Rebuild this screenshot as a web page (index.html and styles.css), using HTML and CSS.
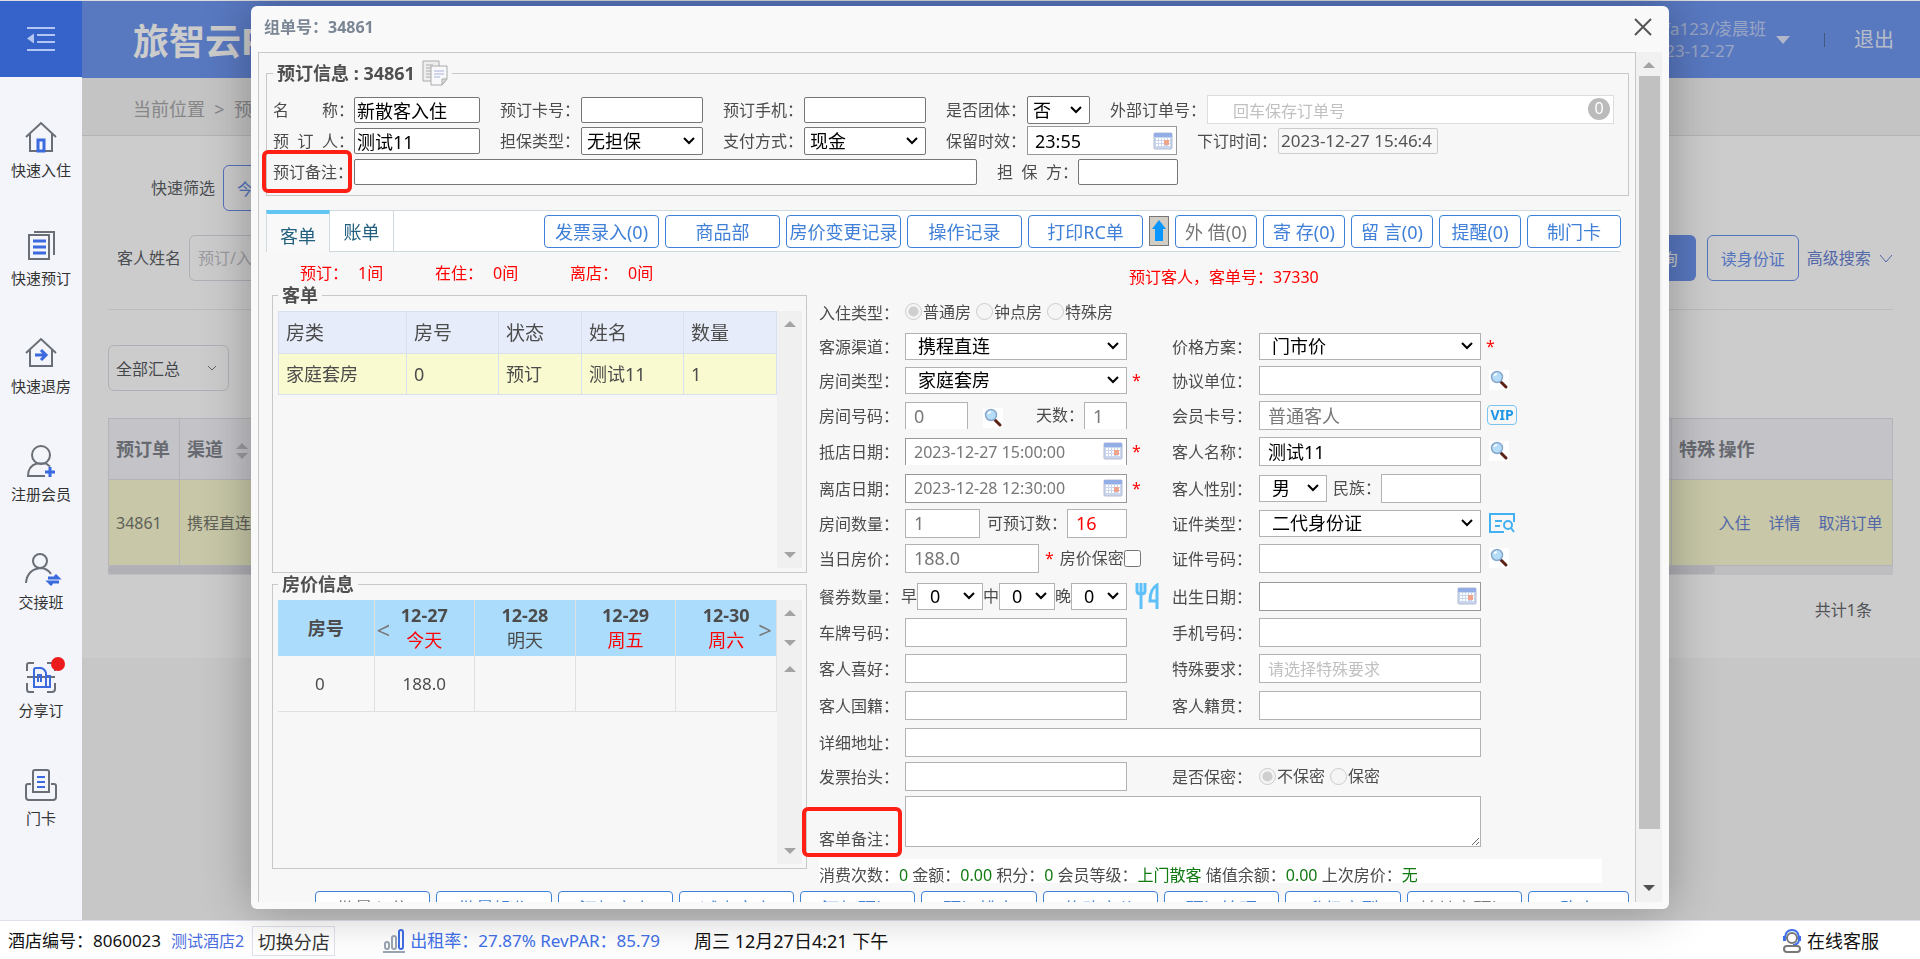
FILE: index.html
```html
<!DOCTYPE html>
<html lang="zh-CN">
<head>
    <meta charset="UTF-8">
    <meta name="viewport" content="width=device-width, initial-scale=1.0">
    <title>旅智云PMS</title>
    <link rel="stylesheet" href="styles.css">
</head>
<body>

<!-- Shared icons -->
<svg class="symbols" aria-hidden="true">
    <symbol id="calendar" viewBox="0 0 20 18">
        <rect x="1" y="1" width="18" height="16" rx="1" fill="#c9d6ee" stroke="#b4bdd2"/>
        <path d="M1 1h18v4H1z" fill="#93aee6"/>
        <path d="M3 6h2v2H3zM6 6h2v2H6zM9 6h2v2H9zM12 6h2v2h-2zM15 6h2v2h-2zM3 9h2v2H3zM6 9h2v2H6zM9 9h2v2H9zM15 9h2v2h-2zM3 12h2v2H3zM6 12h2v2H6zM9 12h2v2H9zM15 12h2v2h-2z" fill="#fff"/>
        <rect x="11" y="8" width="5" height="5" fill="#f0a48c"/>
    </symbol>
    <symbol id="search" viewBox="0 0 20 20">
        <rect width="20" height="20" fill="#fff"/>
        <path d="M12 12l5 5" stroke="#5c2218" stroke-width="3" stroke-linecap="round"/>
        <circle cx="8" cy="7" r="5.500" fill="#b5dcf8" stroke="#88a9cc" stroke-width="1.500"/>
        <path d="M5 6q1-2 3-2" stroke="#fff" stroke-width="1.500" fill="none"/>
    </symbol>
</svg>

<div class="app">
    <nav class="sidebar">
        <button class="menu-toggle" type="button" aria-label="菜单">
            <svg width="28" height="26" viewBox="0 0 28 26" fill="none" stroke="#b3c6f2" stroke-width="2">
                <path d="M0 2h28M10 9h18M10 16h18M0 24h28"/>
                <path d="M0 12.500l7-5v10z" fill="#b3c6f2" stroke="none"/>
            </svg>
        </button>
        <a href="#" class="nav-item">
            <svg viewBox="0 0 32 32"><path d="M1 16L16 2l15 14M5 13v17h22V13" class="ln"/><path d="M13 30V19h6v11z" class="bl"/></svg>
            <span>快速入住</span>
        </a>
        <a href="#" class="nav-item">
            <svg viewBox="0 0 32 32"><path d="M4 6h20v24H4zM9 3h20v23" class="ln"/><path d="M8 12h13M8 18h13M8 24h13" class="bl"/></svg>
            <span>快速预订</span>
        </a>
        <a href="#" class="nav-item">
            <svg viewBox="0 0 32 32"><path d="M1 16L16 2l15 14M5 13v16h22V13" class="ln"/><path d="M10 18h10M16 13l5 5-5 5" class="bl"/></svg>
            <span>快速退房</span>
        </a>
        <a href="#" class="nav-item">
            <svg viewBox="0 0 32 32"><circle cx="16" cy="10" r="9" class="ln"/><path d="M20 31H3q0-10 9-12.500h9l4 3" class="ln"/><path d="M25 22v10M20 27h10" class="bl"/></svg>
            <span>注册会员</span>
        </a>
        <a href="#" class="nav-item">
            <svg viewBox="0 0 32 32"><circle cx="15" cy="8" r="7" class="ln"/><path d="M1 30q1-13 14-15q7 0 11 6" class="ln"/><path d="M23 25h10l-3-3M34 29H24l3 3" class="bl"/></svg>
            <span>交接班</span>
        </a>
        <a href="#" class="nav-item">
            <svg viewBox="0 0 32 32"><path d="M2 10V4q0-2 2-2h5M22 2h5q3 0 3 2v6M2 22v6q0 3 2 3h5M22 31h5q3 0 3-3v-6M2 16h28" class="ln"/><path d="M9 26V9q0-2 2-2h5q4 1 5 5v14M13 21v-7h3v7M21 15h4v11M8 26h18" class="bl thin"/></svg>
            <span>分享订</span>
            <i class="dot"></i>
        </a>
        <a href="#" class="nav-item">
            <svg viewBox="0 0 32 32"><path d="M8 23V3q0-2 2-2h12q2 0 2 2v20M7 23h18M6 15H3q-2 0-2 2v11q0 3 3 3h24q3 0 3-3V17q0-2-2-2h-3" class="ln"/><path d="M12 8h8M12 13h8M12 18h8" class="bl thin"/></svg>
            <span>门卡</span>
        </a>
    </nav>

    <main class="main">
        <header class="topbar">
            <h1>旅智云PMS</h1>
            <div class="account">
                <div>alifa123/凌晨班<br>2023-12-27</div>
                <i class="caret"></i>
                <i class="divider"></i>
                <a href="#">退出</a>
            </div>
        </header>
        <div class="crumbs">当前位置 &nbsp;&gt;&nbsp; 预订管理</div>
        <section class="content">
            <div class="filter quick">
                <span>快速筛选</span>
                <button type="button" class="btn-line">今日预抵</button>
            </div>
            <div class="filter">
                <label for="guestName">客人姓名</label>
                <input id="guestName" class="box" type="text" placeholder="预订/入住人">
                <span class="spacer"></span>
                <button type="button" class="btn-fill">查询</button>
                <button type="button" class="btn-line">读身份证</button>
                <a href="#" class="more">高级搜索
                    <svg width="14" height="10" viewBox="0 0 14 10" fill="none" stroke="currentColor"><path d="M1 1l6 7 6-7"/></svg>
                </a>
            </div>
            <div class="summary-pick">
                <button type="button" class="box pick">全部汇总
                    <svg width="10" height="7" viewBox="0 0 10 7" fill="none" stroke="#777"><path d="M1 1l4 4 4-4"/></svg>
                </button>
            </div>
            <table class="orders">
                <colgroup><col class="c-order"><col class="c-channel"><col><col class="c-special"><col class="c-ops"></colgroup>
                <thead>
                    <tr><th>预订单</th><th>渠道 <i class="sort"></i></th><th></th><th class="tight">特殊</th><th>操作</th></tr>
                </thead>
                <tbody>
                    <tr>
                        <td>34861</td><td>携程直连</td><td></td><td></td>
                        <td><div class="ops"><a href="#">入住</a><a href="#">详情</a><a href="#">取消订单</a></div></td>
                    </tr>
                </tbody>
            </table>
            <div class="hscroll"><i></i></div>
            <p class="total">共计1条</p>
        </section>
        <div class="shade"></div>
    </main>
</div>

<footer class="statusbar">
    <span>酒店编号：8060023</span>
    <a href="#" class="hotel">测试酒店2</a>
    <button type="button">切换分店</button>
    <a href="#" class="rate">
        <svg width="22" height="26" viewBox="0 0 22 26" fill="none" stroke-width="2">
            <path d="M0 24h22" stroke="#9aa6b4"/>
            <rect x="2" y="14" width="4" height="7" rx="2" stroke="#9aa6b4"/>
            <rect x="9" y="8" width="4" height="13" rx="2" stroke="#9aa6b4"/>
            <rect x="16" y="2" width="4" height="19" rx="2" stroke="#3f6fe6"/>
        </svg>
        出租率：27.87% RevPAR：85.79
    </a>
    <span class="clock">周三 12月27日4:21 下午</span>
    <a href="#" class="service">
        <svg width="20" height="26" viewBox="0 0 20 26" fill="none" stroke-width="2">
            <circle cx="10" cy="10" r="5" stroke="#777"/>
            <path d="M3 13V9q1-7 7-7t7 7v4M2 8v5M18 8v5M17 13q-2 4-6 4" stroke="#3f6fe6"/>
            <rect x="2" y="18" width="16" height="6" rx="3" stroke="#777"/>
        </svg>
        在线客服
    </a>
</footer>

<!-- Order dialog -->
<div class="dialog" role="dialog" aria-labelledby="dialogTitle">
    <div class="dialog-head">
        <h2 id="dialogTitle">组单号：34861</h2>
        <button type="button" aria-label="关闭">
            <svg width="18" height="18" viewBox="0 0 18 18" stroke="#555" stroke-width="2"><path d="M1 1l16 16M17 1L1 17"/></svg>
        </button>
    </div>
    <div class="dialog-body">
        <div class="pane">
            <fieldset class="booking">
                <legend>预订信息 : 34861
                    <svg width="26" height="26" viewBox="0 0 26 26" stroke="#aaa">
                        <path d="M1 1h16v20H1z" fill="#eee"/><path d="M4 5h7M4 8h5M4 11h5M4 14h5M4 17h5"/>
                        <path d="M9 6h16v13l-5 6H9z" fill="#f8f8fa"/><path d="M25 19h-5v6z" fill="#ddd"/>
                        <path d="M12 11h10M12 14h10M12 17h6" stroke="#aab2dc"/>
                    </svg>
                </legend>
                <div class="line">
                    <label for="bName"><span>名</span><span>称：</span></label>
                    <input id="bName" class="w126" type="text" value="新散客入住">
                    <label for="bCard">预订卡号：</label>
                    <input id="bCard" class="w122" type="text">
                    <label for="bPhone">预订手机：</label>
                    <input id="bPhone" class="w122" type="text">
                    <label for="bGroup">是否团体：</label>
                    <select id="bGroup" class="w63"><option>否</option></select>
                    <label for="bOuter" class="wide">外部订单号：</label>
                    <div class="outer">
                        <input id="bOuter" type="text" placeholder="回车保存订单号">
                        <b class="count">0</b>
                    </div>
                </div>
                <div class="line">
                    <label for="bPerson"><span>预</span><span>订</span><span>人：</span></label>
                    <input id="bPerson" class="w126" type="text" value="测试11">
                    <label for="bGuarantee">担保类型：</label>
                    <select id="bGuarantee" class="w122"><option>无担保</option></select>
                    <label for="bPay">支付方式：</label>
                    <select id="bPay" class="w122"><option>现金</option></select>
                    <label for="bKeep">保留时效：</label>
                    <div class="date w150">
                        <input id="bKeep" type="text" value="23:55">
                        <svg><use href="#calendar"/></svg>
                    </div>
                    <label for="bTime">下订时间：</label>
                    <input id="bTime" class="w160 off" type="text" value="2023-12-27 15:46:4" disabled>
                </div>
                <div class="line">
                    <label for="bNote" class="mark">预订备注：</label>
                    <input id="bNote" class="w623" type="text">
                    <label for="bGuarantor"><span>担</span><span>保</span><span>方：</span></label>
                    <input id="bGuarantor" class="w100" type="text">
                </div>
            </fieldset>

            <div class="tabbar">
                <button type="button" class="tab active">客单</button>
                <button type="button" class="tab">账单</button>
                <div class="actions">
                    <button type="button">发票录入(0)</button>
                    <button type="button">商品部</button>
                    <button type="button">房价变更记录</button>
                    <button type="button">操作记录</button>
                    <button type="button">打印RC单</button>
                    <button type="button" class="up" aria-label="上传">
                        <svg width="14" height="22" viewBox="0 0 14 22"><path d="M7 0l7 9h-3v12H3V9H0z" fill="#0a96ff"/></svg>
                    </button>
                    <button type="button" class="small gray">外 借(0)</button>
                    <button type="button" class="small">寄 存(0)</button>
                    <button type="button" class="small">留 言(0)</button>
                    <button type="button" class="small">提醒(0)</button>
                    <button type="button" class="card">制门卡</button>
                </div>
            </div>

            <div class="columns">
                <div class="left">
                    <div class="stats">
                        <p><span>预订：</span><span>1间</span></p>
                        <p><span>在住：</span><span>0间</span></p>
                        <p><span>离店：</span><span>0间</span></p>
                    </div>
                    <fieldset class="guests">
                        <legend>客单</legend>
                        <div class="scroller">
                            <table>
                                <colgroup><col class="g1"><col class="g2"><col class="g3"><col class="g4"><col></colgroup>
                                <thead><tr><th>房类</th><th>房号</th><th>状态</th><th>姓名</th><th>数量</th></tr></thead>
                                <tbody><tr><td>家庭套房</td><td>0</td><td>预订</td><td>测试11</td><td>1</td></tr></tbody>
                            </table>
                            <div class="track"><i class="arr-up"></i><i class="arr-down"></i></div>
                        </div>
                    </fieldset>
                    <fieldset class="prices">
                        <legend>房价信息</legend>
                        <div class="scroller">
                            <table>
                                <colgroup><col class="p1"><col><col><col><col></colgroup>
                                <thead>
                                    <tr>
                                        <th>房号</th>
                                        <th><button type="button" class="prev">&lt;</button>12-27<span class="hot">今天</span></th>
                                        <th>12-28<span>明天</span></th>
                                        <th>12-29<span class="hot">周五</span></th>
                                        <th>12-30<span class="hot">周六</span><button type="button" class="next">&gt;</button></th>
                                    </tr>
                                </thead>
                                <tbody><tr><td>0</td><td>188.0</td><td></td><td></td><td></td></tr></tbody>
                            </table>
                            <div class="tracks">
                                <div class="track short"><i class="arr-up"></i><i class="arr-down"></i></div>
                                <div class="track"><i class="arr-up"></i><i class="arr-down"></i></div>
                            </div>
                        </div>
                    </fieldset>
                </div>

                <div class="right">
                    <p class="order-no">预订客人，客单号：37330</p>
                    <form class="detail">
                        <span class="name">入住类型：</span>
                        <div class="cell full radios">
                            <label><input type="radio" name="stay" checked disabled>普通房</label>
                            <label><input type="radio" name="stay" disabled>钟点房</label>
                            <label><input type="radio" name="stay" disabled>特殊房</label>
                        </div>

                        <label class="name" for="source">客源渠道：</label>
                        <div class="cell"><select id="source"><option>携程直连</option></select></div>
                        <span></span>
                        <label class="name" for="plan">价格方案：</label>
                        <div class="cell"><select id="plan"><option>门市价</option></select></div>
                        <span class="after star">*</span>

                        <label class="name" for="roomType">房间类型：</label>
                        <div class="cell"><select id="roomType"><option>家庭套房</option></select></div>
                        <span class="after star">*</span>
                        <label class="name" for="company">协议单位：</label>
                        <div class="cell"><input id="company" type="text"></div>
                        <svg class="after find"><use href="#search"/></svg>

                        <label class="name" for="roomNo">房间号码：</label>
                        <div class="cell pair">
                            <input id="roomNo" class="w63 cut" type="text" value="0" disabled>
                            <svg class="find"><use href="#search"/></svg>
                            <label for="days">天数：</label>
                            <input id="days" class="w43 cut" type="text" value="1" disabled>
                        </div>
                        <span></span>
                        <label class="name" for="member">会员卡号：</label>
                        <div class="cell"><input id="member" type="text" value="普通客人" disabled></div>
                        <b class="after vip">VIP</b>

                        <label class="name" for="arrive">抵店日期：</label>
                        <div class="cell date"><input id="arrive" class="cut" type="text" value="2023-12-27 15:00:00" disabled><svg><use href="#calendar"/></svg></div>
                        <span class="after star">*</span>
                        <label class="name" for="guest">客人名称：</label>
                        <div class="cell"><input id="guest" type="text" value="测试11"></div>
                        <svg class="after find"><use href="#search"/></svg>

                        <label class="name" for="leave">离店日期：</label>
                        <div class="cell date"><input id="leave" type="text" value="2023-12-28 12:30:00" disabled><svg><use href="#calendar"/></svg></div>
                        <span class="after star">*</span>
                        <label class="name" for="sex">客人性别：</label>
                        <div class="cell pair">
                            <select id="sex" class="w68"><option>男</option></select>
                            <label for="nation">民族：</label>
                            <input id="nation" class="w100" type="text">
                        </div>
                        <span></span>

                        <label class="name" for="rooms">房间数量：</label>
                        <div class="cell pair">
                            <input id="rooms" class="w75" type="text" value="1" disabled>
                            <label for="free">可预订数：</label>
                            <input id="free" class="w60 red" type="text" value="16">
                        </div>
                        <span></span>
                        <label class="name" for="idType">证件类型：</label>
                        <div class="cell"><select id="idType"><option>二代身份证</option></select></div>
                        <svg class="after card-icon" viewBox="0 0 26 20" fill="none" stroke="#43b0f0" stroke-width="2">
                            <path d="M15 19H1V1h24v8M6 8h7M6 13h5"/><circle cx="19" cy="12" r="4"/><path d="M22 15l3 4"/>
                        </svg>

                        <label class="name" for="price">当日房价：</label>
                        <div class="cell price">
                            <input id="price" class="w134" type="text" value="188.0" disabled>
                            <span class="star">*</span>
                            <label for="secret">房价保密</label><input id="secret" type="checkbox">
                        </div>
                        <span></span>
                        <label class="name" for="idNo">证件号码：</label>
                        <div class="cell"><input id="idNo" type="text"></div>
                        <svg class="after find"><use href="#search"/></svg>

                        <span class="name">餐券数量：</span>
                        <div class="cell meals">
                            <label for="m1">早</label><select id="m1" class="w66"><option>0</option></select>
                            <label for="m2">中</label><select id="m2" class="w56"><option>0</option></select>
                            <label for="m3">晚</label><select id="m3" class="w56"><option>0</option></select>
                        </div>
                        <svg class="after fork" viewBox="0 0 24 26" fill="none" stroke="#5ec0f8" stroke-width="3">
                            <path d="M2 0v8q0 3 4 3t4-3V0M6 0v26M22 26V2q-7 4-7 16h7"/>
                        </svg>
                        <label class="name" for="birth">出生日期：</label>
                        <div class="cell date"><input id="birth" type="text"><svg><use href="#calendar"/></svg></div>
                        <span></span>

                        <label class="name" for="plate">车牌号码：</label>
                        <div class="cell"><input id="plate" type="text"></div>
                        <span></span>
                        <label class="name" for="mobile">手机号码：</label>
                        <div class="cell"><input id="mobile" type="text"></div>
                        <span></span>

                        <label class="name" for="like">客人喜好：</label>
                        <div class="cell"><input id="like" type="text"></div>
                        <span></span>
                        <label class="name" for="special">特殊要求：</label>
                        <div class="cell"><input id="special" type="text" placeholder="请选择特殊要求"></div>
                        <span></span>

                        <label class="name" for="country">客人国籍：</label>
                        <div class="cell"><input id="country" type="text"></div>
                        <span></span>
                        <label class="name" for="native">客人籍贯：</label>
                        <div class="cell"><input id="native" type="text"></div>
                        <span></span>

                        <label class="name" for="address">详细地址：</label>
                        <div class="cell long"><input id="address" type="text"></div>
                        <span></span>

                        <label class="name" for="invoice">发票抬头：</label>
                        <div class="cell"><input id="invoice" type="text"></div>
                        <span></span>
                        <span class="name">是否保密：</span>
                        <div class="cell radios">
                            <label><input type="radio" name="hide" checked disabled>不保密</label>
                            <label><input type="radio" name="hide" disabled>保密</label>
                        </div>
                        <span></span>

                        <label class="name note mark" for="note">客单备注：</label>
                        <div class="cell long"><textarea id="note"></textarea></div>
                        <span></span>
                    </form>
                    <p class="spend">消费次数：<b>0</b> 金额：<b>0.00</b> 积分：<b>0</b> 会员等级：<b>上门散客</b> 储值余额：<b>0.00</b> 上次房价：<b>无</b></p>
                </div>
            </div>

            <div class="bottom-actions">
                <button type="button" class="gray">批量入住</button>
                <button type="button">批量操作</button>
                <button type="button">添加客人</button>
                <button type="button">减少客人</button>
                <button type="button">添加预订</button>
                <button type="button">预订排房</button>
                <button type="button">修改房价</button>
                <button type="button">预订管理</button>
                <button type="button">升级房型</button>
                <button type="button" class="gray">转其它预订</button>
                <button type="button" class="last">确定</button>
            </div>
        </div>
        <div class="vscroll"><i class="arr-up"></i><i class="thumb"></i><i class="arr-down dark"></i></div>
    </div>
</div>

</body>
</html>
```
FILE: styles.css
```css
* {
    box-sizing: border-box;
}
body {
    margin: 0;
    height: 100vh;
    display: flex;
    flex-direction: column;
    overflow: hidden;
    font-family: "Noto Sans", "Noto Sans CJK SC", sans-serif;
    font-size: 16px;
    line-height: 20px;
    color: #4c4c4c;
    background-color: #fff;
}
button, input, select, textarea {
    font-family: inherit;
    font-size: 18px;
    margin: 0;
}
button {
    padding: 0;
    border: none;
    background: none;
    cursor: pointer;
}
a {
    color: inherit;
    text-decoration: none;
}
p, h1, h2 {
    margin: 0;
}
i {
    display: block;
}
.symbols {
    position: absolute;
    width: 0;
    height: 0;
}
.app {
    flex: 1;
    min-height: 0;
    display: flex;
}

/* Sidebar */
.sidebar {
    width: 82px;
    background-color: #f3f5fb;
    border-top: 1px solid #ddd;
}
.menu-toggle {
    width: 100%;
    height: 76px;
    margin-bottom: 32px;
    display: flex;
    align-items: center;
    justify-content: center;
    background-color: #3563c9;
}
.nav-item {
    position: relative;
    height: 108px;
    padding-top: 12px;
    display: flex;
    flex-direction: column;
    align-items: center;
    gap: 7px;
    font-size: 15px;
    color: #333;
}
.nav-item svg {
    width: 32px;
    height: 32px;
    overflow: visible;
}
.nav-item .ln, .nav-item .bl {
    fill: none;
    stroke: #6a6e76;
    stroke-width: 2;
}
.nav-item .bl {
    stroke: #3a6ade;
    stroke-width: 3;
}
.nav-item .thin {
    stroke-width: 2;
}
.dot {
    position: absolute;
    top: 8px;
    right: 17px;
    width: 14px;
    height: 14px;
    border-radius: 50%;
    background-color: #ec1c1c;
}

/* Page behind the dialog */
.main {
    position: relative;
    flex: 1;
    display: flex;
    flex-direction: column;
    background-color: #f9f9f9;
    border-top: 1px solid #ddd;
}
.shade {
    position: absolute;
    inset: 0;
    background-color: rgba(0, 0, 0, 0.2);
}
.topbar {
    height: 77px;
    padding: 0 26px 0 51px;
    display: flex;
    align-items: center;
    justify-content: space-between;
    background-color: #6e96f0;
    color: #fff;
}
.topbar h1 {
    padding-top: 4px;
    font-size: 36px;
    line-height: 48px;
}
.account {
    display: flex;
    align-items: center;
    font-size: 17px;
    line-height: 22px;
    color: #c0cff5;
}
.account .caret {
    margin: 0 34px 0 10px;
    border: 7px solid transparent;
    border-top: 8px solid #dce5fb;
    border-bottom: none;
}
.account .divider {
    width: 1px;
    height: 14px;
    margin-right: 29px;
    background-color: #55709f;
}
.account a {
    font-size: 20px;
    color: #e4ebfb;
}
.crumbs {
    height: 58px;
    padding-left: 51px;
    font-size: 18px;
    line-height: 62px;
    color: #a8a8a8;
    background-color: #f5f5f7;
    border-bottom: 1px solid #e2e2e4;
}
.content {
    height: 522px;
    padding: 29px 27px 0 26px;
    background-color: #fff;
}
.filter {
    display: flex;
    align-items: center;
    height: 46px;
    gap: 8px;
    padding-left: 9px;
    color: #5c5f66;
}
.filter.quick {
    margin-bottom: 24px;
    padding-left: 43px;
}
.filter button {
    height: 46px;
    width: 92px;
    font-size: 16px;
    border-radius: 6px;
}
.filter .btn-line {
    border: 1px solid #6a90ee;
    color: #6a90ee;
}
.filter .btn-fill {
    width: 68px;
    margin-right: 3px;
    background-color: #6e96f0;
    color: #fff;
}
.box {
    height: 46px;
    padding: 0 8px;
    border: 1px solid #dadde6;
    border-radius: 6px;
    background-color: #fff;
    font-size: 16px;
}
.box::placeholder {
    color: #c3c3c9;
}
.spacer {
    flex: 1;
}
.more {
    color: #6a82d2;
}
.more svg {
    margin-left: 4px;
}
.summary-pick {
    margin-top: 28px;
    padding-top: 35px;
    border-top: 1px solid #ebebee;
}
.pick {
    width: 121px;
    display: flex;
    align-items: center;
    justify-content: space-between;
    padding: 0 11px 0 7px;
    color: #55585f;
}
.orders {
    width: 100%;
    margin-top: 27px;
    table-layout: fixed;
    border-collapse: collapse;
}
.c-order {
    width: 71px;
}
.c-channel {
    width: 81px;
}
.c-special {
    width: 40px;
}
.c-ops {
    width: 181px;
}
.orders th, .orders td {
    padding: 0 7px;
    border: 1px solid #e0e2ea;
    text-align: left;
    white-space: nowrap;
}
.orders th {
    height: 61px;
    font-size: 18px;
    color: #82858e;
    background-color: #f5f6fa;
}
.orders .tight {
    padding-right: 0;
    border-right: none;
}
.orders td {
    height: 86px;
    font-size: 16px;
    color: #77796f;
    background-color: #fbfbd3;
}
.orders td:nth-child(4) {
    border-right: none;
}
.orders td:last-child, .orders th:last-child {
    border-left: none;
}
.sort {
    display: inline-block;
    margin-left: 8px;
    vertical-align: middle;
}
.sort::before, .sort::after {
    content: "";
    display: block;
    border: 6px solid transparent;
    border-bottom-color: #c4c4c8;
    border-top: none;
}
.sort::after {
    margin-top: 4px;
    border-top: 6px solid #c4c4c8;
    border-bottom: none;
}
.ops {
    display: flex;
    gap: 18px;
    color: #6a82d2;
}
.hscroll {
    height: 9px;
    background-color: #eeeef0;
}
.hscroll i {
    width: 90%;
    height: 8px;
    border-radius: 4px;
    background-color: #dcdde3;
}
.total {
    margin-top: 25px;
    padding-right: 21px;
    text-align: right;
    color: #66686c;
}

/* Status bar */
.statusbar {
    height: 39px;
    padding: 1px 41px 0 8px;
    display: flex;
    align-items: center;
    border-top: 1px solid #dfe1ec;
    font-size: 17px;
    color: #111;
    background-color: #fff;
}
.statusbar a {
    display: flex;
    align-items: center;
    gap: 5px;
}
.statusbar .hotel {
    margin: 0 8px 0 10px;
    font-size: 16px;
    color: #4a6ce0;
}
.statusbar button {
    width: 83px;
    height: 30px;
    margin-right: 48px;
    border: 1px solid #dfe1ec;
    color: #333;
}
.statusbar .rate {
    margin-right: 34px;
    color: #4170ea;
}
.statusbar .clock {
    font-size: 18px;
}
.statusbar .service {
    margin-left: auto;
    font-size: 18px;
}

/* Dialog */
.dialog {
    position: fixed;
    top: 6px;
    bottom: 50px;
    left: 251px;
    right: 251px;
    padding: 0 7px 7px;
    display: flex;
    flex-direction: column;
    border-radius: 6px;
    background-color: #f9f9fa;
    box-shadow: 0 0 50px rgba(0, 0, 0, 0.3);
}
.dialog-head {
    height: 46px;
    padding: 0 10px 5px 6px;
    display: flex;
    align-items: center;
    justify-content: space-between;
}
.dialog-head h2 {
    font-size: 16px;
    color: #7a8694;
}
.dialog-head svg {
    display: block;
}
.dialog-body {
    flex: 1;
    min-height: 0;
    display: flex;
}
.pane {
    flex: 1;
    min-width: 0;
    padding: 7px 6px 0 7px;
    overflow: hidden;
    border: 1px solid #c8c8c8;
    border-bottom: none;
    background-color: #f7f7f7;
}
.vscroll {
    width: 26px;
    display: flex;
    flex-direction: column;
    align-items: center;
    background-color: #f1f1f1;
}
.vscroll .thumb {
    width: 21px;
    flex: 1;
    margin: 8px 0 56px;
    background-color: #c1c1c1;
}
.vscroll .arr-up {
    margin-top: 10px;
}
.arr-up, .arr-down {
    border: 6px solid transparent;
    border-bottom: 6px solid #a3a3a3;
    border-top: none;
}
.arr-down {
    border-top: 6px solid #a3a3a3;
    border-bottom: none;
}
.vscroll .arr-down {
    margin-bottom: 11px;
}
.arr-down.dark {
    border-top-color: #505050;
}

.dialog fieldset {
    margin: 0;
    min-width: 0;
    border: 1px solid #c8c8c8;
}
.dialog legend {
    padding: 0 4px;
    font-size: 18px;
    line-height: 22px;
    font-weight: bold;
    color: #4f4f4f;
}
.dialog input, .dialog select, .dialog textarea {
    height: 26px;
    padding: 0 2px;
    border: 1px solid #767676;
    border-radius: 2px;
    background-color: #fff;
    color: #000;
}
.dialog select {
    appearance: none;
    padding: 0 5px;
    background-image: url("data:image/svg+xml,%3Csvg xmlns='http://www.w3.org/2000/svg' width='12' height='8' fill='none' stroke='black' stroke-width='2'%3E%3Cpath d='M1 1l5 5 5-5'/%3E%3C/svg%3E");
    background-repeat: no-repeat;
    background-position: right 7px center;
}
.dialog input::placeholder {
    color: #c0c0c0;
    font-size: 16px;
}

/* Booking block */
.booking {
    padding: 8px 14px 8px 6px;
}
.dialog .booking legend {
    display: flex;
    align-items: center;
    gap: 7px;
    height: 26px;
}
.line {
    display: flex;
    align-items: center;
    height: 31px;
}
.line label {
    width: 81px;
    height: 20px;
    display: flex;
    justify-content: space-between;
    position: relative;
    flex-shrink: 0;
    white-space: nowrap;
}
.line label.wide {
    width: 97px;
}
.line input + label, .line select + label, .line div + label {
    margin-left: 20px;
}
.dialog .line select {
    height: 28px;
}
.dialog .date input, .dialog .outer input {
    width: 100%;
    height: 29px;
    padding-left: 7px;
    border-color: #999;
    border-radius: 0;
}
.outer {
    flex: 1;
    position: relative;
}
.dialog .outer input {
    padding-left: 25px;
    border-color: #ddd;
}
.count {
    position: absolute;
    right: 4px;
    top: 3px;
    width: 22px;
    height: 22px;
    border-radius: 50%;
    background-color: #bbb;
    color: #fff;
    line-height: 21px;
    text-align: center;
    font-weight: normal;
}
.dialog .off {
    background-color: #f7f7f7;
    border-color: #ccc;
    color: #545454;
    font-size: 17px;
}
.date {
    position: relative;
}
.date svg {
    position: absolute;
    right: 4px;
    top: 50%;
    width: 20px;
    height: 18px;
    margin-top: -9px;
}
.mark {
    position: relative;
}
.mark::after {
    content: "";
    position: absolute;
    inset: -12px 2px -11px -11px;
    border: 4px solid #ff1f14;
    border-radius: 6px;
}

/* Field widths */
.w43 { width: 43px; }
.w56 { width: 56px; }
.w60 { width: 60px; }
.w63 { width: 63px; }
.w66 { width: 66px; }
.w68 { width: 68px; }
.w75 { width: 75px; }
.w100 { width: 100px; }
.w122 { width: 122px; }
.w126 { width: 126px; }
.w134 { width: 134px; }
.w150 { width: 150px; }
.w160 { width: 160px; }
.w623 { width: 623px; }

/* Tabs and actions */
.tabbar {
    display: flex;
    height: 42px;
    margin: 14px 8px 0 0;
    border: 1px solid #d0dade;
    border-width: 1px 0;
    background-color: #fff;
}
.tab {
    width: 64px;
    height: 40px;
    border-right: 1px solid #d0dade;
    color: #23607f;
}
.tab.active {
    height: 42px;
    margin-top: -1px;
    padding-top: 4px;
    border-top: 4px solid #62c6f3;
    border-left: 1px solid #d0dade;
    background-color: #f9f9f9;
}
.actions {
    flex: 1;
    display: flex;
    align-items: center;
    justify-content: flex-end;
    gap: 6px;
}
.actions button, .bottom-actions button {
    width: 115px;
    height: 33px;
    border: 1px solid #3f80d8;
    border-radius: 4px;
    background-color: #fff;
    color: #4080d8;
    white-space: nowrap;
}
.actions .up {
    width: 20px;
    height: 30px;
    border: 1px solid #777;
    border-radius: 0;
    background-color: #d2cec6;
}
.up svg {
    display: block;
    margin: 0 auto;
}
.actions .small {
    width: 82px;
}
.actions .card {
    width: 94px;
}
.actions .gray, .bottom-actions .gray {
    color: #777;
}
.bottom-actions {
    display: flex;
    gap: 6px;
    margin: 8px 0 0 49px;
}
.bottom-actions button {
    flex: 8 1 0;
}
.bottom-actions .last {
    flex-grow: 7;
}

.columns {
    display: flex;
    gap: 12px;
    padding-left: 6px;
}
.left {
    width: 535px;
    flex-shrink: 0;
}
.right {
    flex: 1;
    min-width: 0;
}
.stats {
    display: flex;
    height: 32px;
    padding: 11px 0 0 28px;
    color: #f00;
}
.stats p {
    width: 135px;
    display: flex;
    gap: 10px;
}

/* Left tables */
.guests {
    height: 289px;
}
.prices {
    height: 296px;
}
.dialog .guests, .dialog .prices {
    padding: 5px 4px 4px 5px;
}
.scroller {
    height: 100%;
    display: flex;
    align-items: flex-start;
}
.scroller table {
    flex: 1;
    table-layout: fixed;
    border-collapse: collapse;
}
.guests .g1 { width: 128px; }
.guests .g2 { width: 92px; }
.guests .g3 { width: 83px; }
.guests .g4 { width: 102px; }
.guests th, .guests td {
    height: 41px;
    padding: 0 7px;
    border: 1px solid #d8dfee;
    text-align: left;
    font-size: 18px;
    font-weight: normal;
    background-color: #fafad0;
}
.guests th {
    height: 42px;
    font-size: 19px;
    background-color: #e6ecf9;
}
.prices .p1 {
    width: 96px;
}
.prices th, .prices td {
    position: relative;
    height: 56px;
    padding: 0;
    border-right: 1px solid #e0e0e0;
    text-align: center;
    font-size: 18px;
    line-height: 25px;
}
.prices th {
    background-color: #acdcfc;
}
.prices td {
    height: 55px;
    font-size: 17px;
    border-bottom: 1px solid #e0e0e0;
}
.prices td:first-child {
    padding-right: 12px;
}
.prices th span {
    display: block;
    font-weight: normal;
}
.prices .hot {
    color: #f00;
}
.prev, .next {
    position: absolute;
    top: 18px;
    left: 2px;
    font-size: 24px;
    line-height: 24px;
    color: #777;
}
.next {
    left: auto;
    right: 4px;
}
.track {
    width: 25px;
    height: 100%;
    padding: 10px 0;
    display: flex;
    flex-direction: column;
    align-items: center;
    justify-content: space-between;
    background-color: #f0f0f0;
}
.tracks {
    height: 100%;
    display: flex;
    flex-direction: column;
}
.tracks .track {
    flex: 1;
}
.tracks .short {
    flex: 0 0 56px;
}

/* Guest details */
.order-no {
    height: 42px;
    padding: 15px 0 0 310px;
    color: #f00;
}
.detail {
    display: grid;
    grid-template-columns: 86px 222px 45px 87px 222px 1fr;
    grid-template-rows: 35px 34px 34px 36px 36px 38px 32px 38px 38px 34px 38px 36px 38px 30px 60px;
    align-items: center;
}
.name {
    white-space: nowrap;
    padding-top: 2px;
}
.cell {
    display: flex;
    align-items: center;
    white-space: nowrap;
}
.cell.full {
    grid-column: 2 / -1;
}
.cell.long {
    grid-column: 2 / 6;
}
.cell > input, .cell > select {
    flex-shrink: 0;
}
.cell > input:not([class*="w"]):not([type="checkbox"]), .cell > select:only-child, .cell > textarea {
    width: 100%;
}
.dialog .detail input, .dialog .detail select, .dialog .detail textarea {
    height: 29px;
    padding: 0 8px;
    border-color: #b2b2b2;
    border-radius: 0;
}
.dialog .detail select {
    height: 27px;
    padding-left: 12px;
}
.dialog .detail textarea {
    display: block;
    height: 51px;
}
.dialog .detail input:disabled {
    color: #777;
}
.dialog .detail .date input {
    border-color: #999;
    font-size: 16px;
}
.dialog .detail .cut {
    height: 27px;
    border-bottom: none;
}
.dialog .detail .red {
    color: #f00;
}
.pair .find {
    margin: 6px 0 0 15px;
}
.pair label {
    margin-left: auto;
}
.after {
    margin-left: 8px;
}
.star {
    color: #f00;
}
.after.star {
    margin-left: 5px;
}
.find {
    width: 20px;
    height: 20px;
}
.vip {
    width: 30px;
    height: 20px;
    margin-left: 6px;
    border: 1px solid #7cc4f0;
    border-radius: 4px;
    font-size: 14px;
    line-height: 18px;
    text-align: center;
    color: #1e96e6;
}
.card-icon {
    width: 26px;
    height: 20px;
}
.fork {
    width: 24px;
    height: 26px;
}
.price .star {
    margin: 0 6px;
}
.dialog .detail input[type="checkbox"], .dialog .detail input[type="radio"] {
    width: 17px;
    height: 17px;
    margin: 0 1px 0 0;
    flex-shrink: 0;
}
.radios {
    gap: 5px;
}
.radios label {
    display: flex;
    align-items: center;
}
.meals {
    margin-left: -4px;
    justify-content: space-between;
}
.note {
    align-self: end;
    margin-bottom: 2px;
}
.note.mark::after {
    inset: -20px 3px -8px -17px;
}
.spend {
    width: 783px;
    max-width: 100%;
    height: 24px;
    margin-top: 8px;
    padding-top: 6px;
    white-space: nowrap;
    background-color: #fff;
}
.spend b {
    font-weight: normal;
    color: #117a11;
}
```
